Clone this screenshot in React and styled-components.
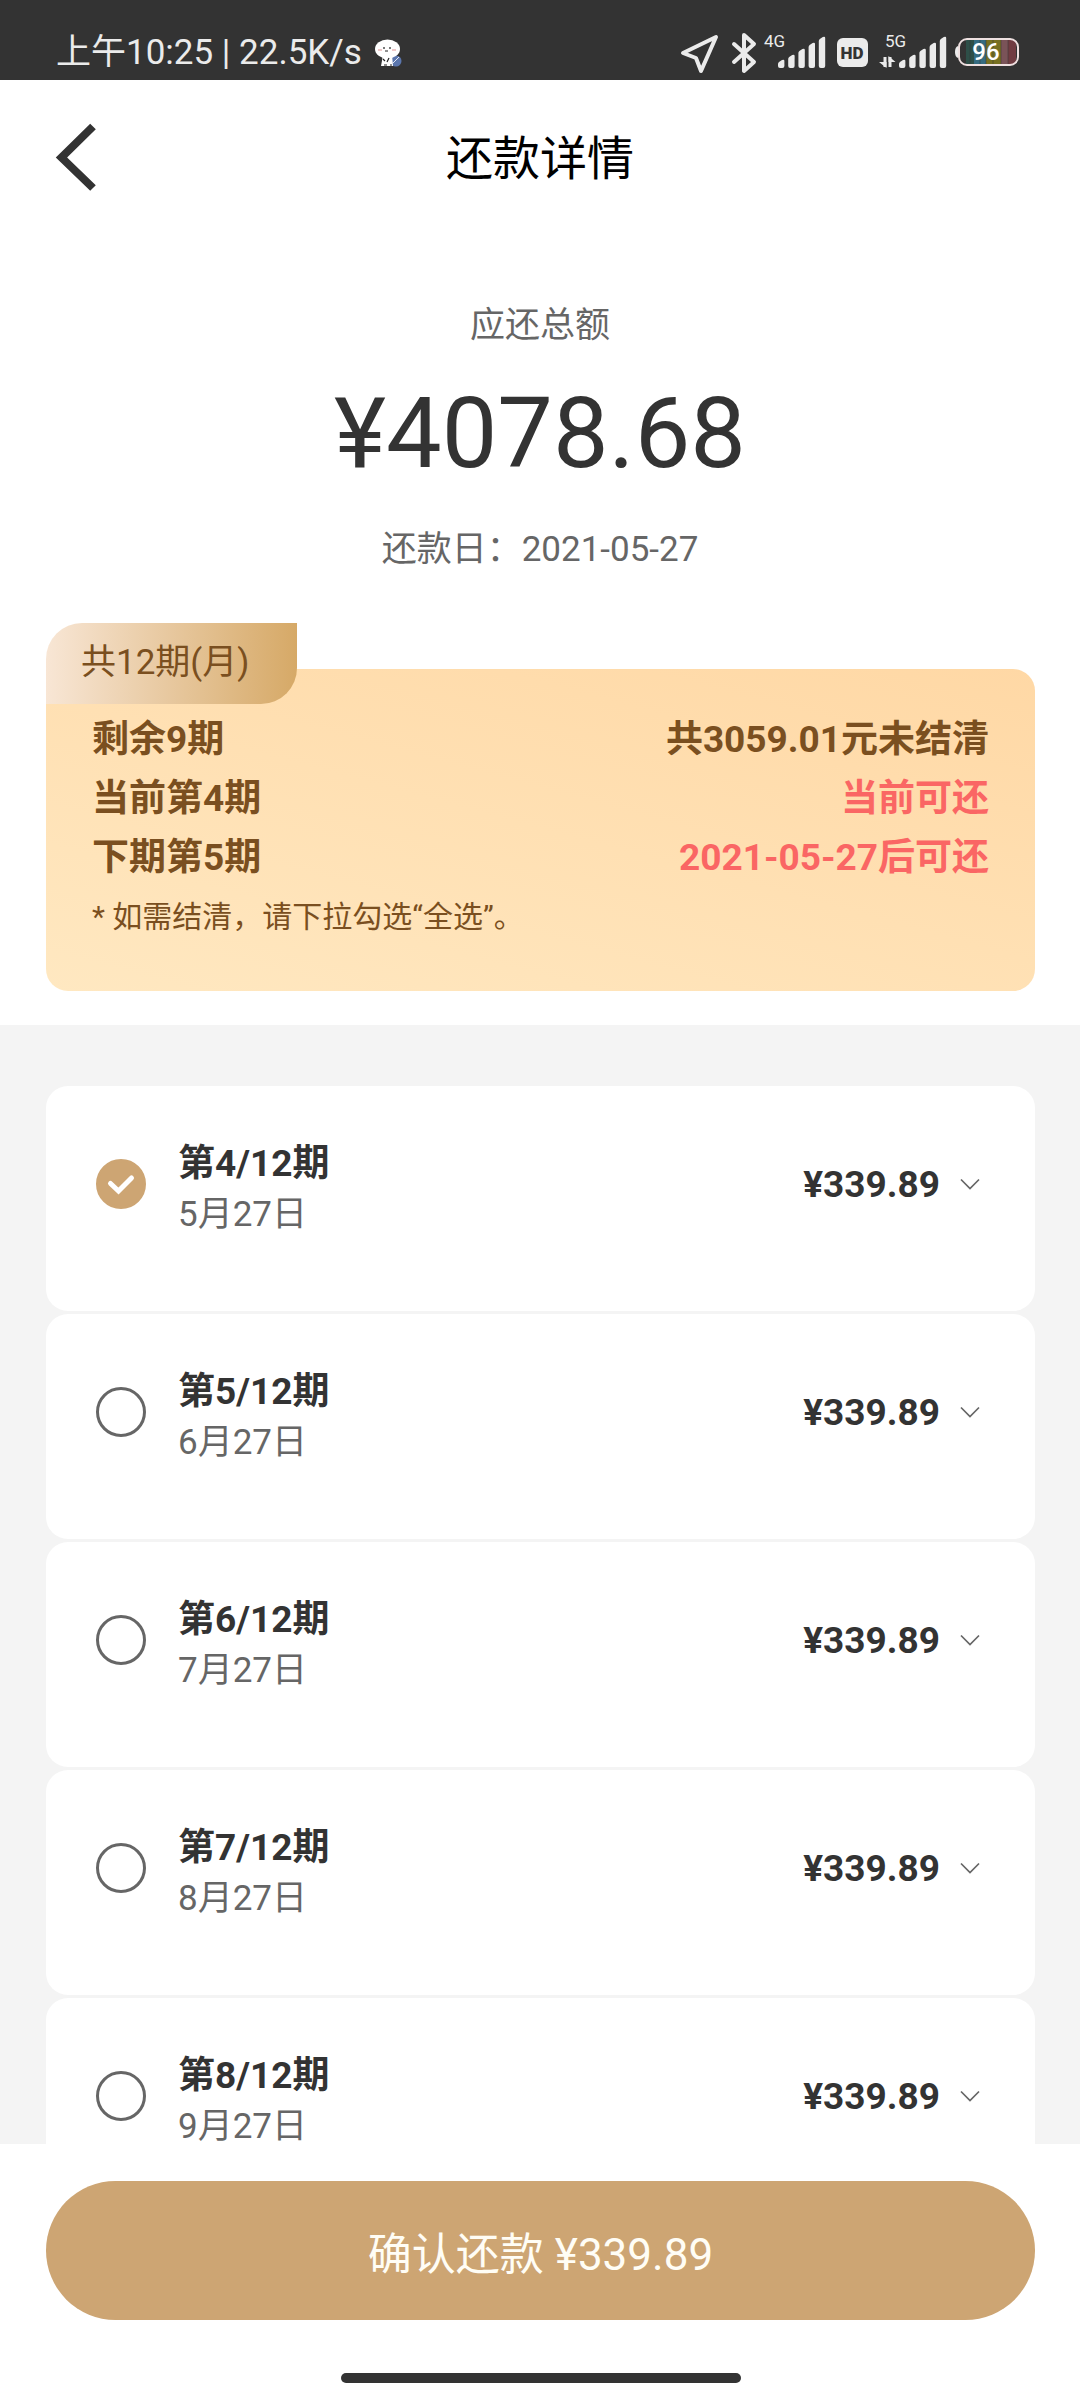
import React, { useState } from "react";
import styled, { createGlobalStyle } from "styled-components";

const GlobalStyle = createGlobalStyle`
  * { box-sizing: border-box; }
  body {
    margin: 0;
    background: #fff;
    color: #333;
    font-family: Roboto, "Noto Sans CJK SC", sans-serif;
  }
  button { font-family: inherit; border: 0; padding: 0; background: none; color: inherit; }
`;

const Page = styled.div`
  height: 100vh;
  display: flex;
  flex-direction: column;
`;

const StatusBar = styled.header`
  display: flex;
  align-items: center;
  justify-content: space-between;
  height: 80px;
  padding: 26px 61px 0 56px;
  background: #333;
  color: #ebebeb;
`;

const StatusGroup = styled.div`
  display: flex;
  align-items: center;
  gap: 12px;
`;

const Clock = styled.span`
  font-size: 35px;
  line-height: 48px;
`;

const Sticker = styled.svg`
  width: 28px;
  height: 28px;
`;

const StatusIcon = styled.svg`
  display: block;
  width: 339px;
  height: 44px;
`;

const NavBar = styled.nav`
  display: grid;
  grid-template-columns: 1fr auto 1fr;
  align-items: center;
  height: 156px;
  padding: 0 46px;
`;

const BackButton = styled.button`
  justify-self: start;
  width: 60px;
  height: 80px;
  svg { display: block; }
`;

const Title = styled.h1`
  margin: 0;
  padding-top: 2px;
  font-size: 47px;
  line-height: 60px;
  font-weight: 400;
  color: #000;
`;

const Summary = styled.section`
  display: flex;
  flex-direction: column;
  align-items: center;
  padding: 66px 46px 49px;
`;

const SummaryText = styled.p`
  margin: 0;
  font-size: 35px;
  line-height: 48px;
  color: #666;
`;

const Total = styled.p`
  margin: 25px 0 35px;
  font-size: 99px;
  line-height: 116px;
`;

const Plan = styled.section`
  display: flex;
  flex-direction: column;
  align-items: stretch;
  padding: 0 45px 34px 46px;
  color: #7a4f20;
`;

const PlanChip = styled.div`
  align-self: flex-start;
  z-index: 1;
  height: 81px;
  margin-bottom: -35px;
  padding: 0 47px 0 35px;
  border-radius: 36px 0 36px 0;
  background: linear-gradient(90deg, #f8e6d5, #d6a967);
  font-size: 35px;
  line-height: 80px;
`;

const PlanCard = styled.div`
  padding: 41px 46px 44px;
  border-radius: 22px;
  background: linear-gradient(195deg, #ffd8a5, #ffe8c1);
`;

const PlanRow = styled.div`
  display: flex;
  justify-content: space-between;
  font-size: 37px;
  line-height: 59px;
  font-weight: 700;
`;

const PlanValue = styled.span`
  color: ${(p) => (p.$alert ? "#fa6664" : "inherit")};
`;

const PlanNote = styled.p`
  margin: 0;
  font-size: 30px;
  line-height: 60px;
`;

const List = styled.ul`
  flex: 1;
  min-height: 0;
  margin: 0;
  padding: 61px 45px 0 46px;
  list-style: none;
  overflow-y: auto;
  scrollbar-width: none;
  background: #f4f4f4;
`;

const Item = styled.li`
  display: flex;
  align-items: center;
  margin-bottom: 3px;
  padding: 42px 55px 71px 50px;
  border-radius: 22px;
  background: #fff;
`;

const ItemLabel = styled.label`
  display: flex;
  flex: 1;
  align-items: center;
  gap: 32px;
`;

const Tick = styled.span`
  display: grid;
  width: 50px;
  height: 50px;
  & > * { grid-area: 1 / 1; }
`;

const TickInput = styled.input`
  appearance: none;
  width: 50px;
  height: 50px;
  margin: 0;
  border: 3px solid #666;
  border-radius: 50%;
  &:checked { border-color: #cda573; background: #cda573; }
`;

const TickMark = styled.svg`
  width: 50px;
  height: 50px;
  pointer-events: none;
`;

const ItemText = styled.span`
  display: flex;
  flex-direction: column;
  gap: 8px;
  padding: 10px 0 8px;
`;

const Period = styled.strong`
  font-size: 37px;
  line-height: 51px;
  font-weight: 700;
`;

const DueDate = styled.span`
  font-size: 35px;
  line-height: 35px;
  color: #666;
`;

const Amount = styled.span`
  font-size: 37px;
  line-height: 51px;
  font-weight: 700;
`;

const ExpandButton = styled.button`
  display: flex;
  margin-left: 20px;
`;

const Footer = styled.footer`
  display: flex;
  flex-direction: column;
  align-items: center;
  padding: 37px 45px 17px 46px;
  background: #fff;
`;

const ConfirmButton = styled.button`
  align-self: stretch;
  height: 139px;
  padding-top: 8px;
  border-radius: 70px;
  background: #cda573;
  color: #fffdf5;
  font-size: 44px;
  line-height: 60px;
`;

const HomeBar = styled.div`
  width: 400px;
  height: 10px;
  margin-top: 53px;
  border-radius: 5px;
  background: #333;
`;

const items = [
  { n: 4, date: "5月27日" },
  { n: 5, date: "6月27日" },
  { n: 6, date: "7月27日" },
  { n: 7, date: "8月27日" },
  { n: 8, date: "9月27日" },
];

const planRows = [
  { label: "剩余9期", value: "共3059.01元未结清" },
  { label: "当前第4期", value: "当前可还", alert: true },
  { label: "下期第5期", value: "2021-05-27后可还", alert: true },
];

function Bars({ x }) {
  const tops = [30, 25, 19, 13, 7];
  return tops.map((t, i) => {
    const l = x + i * 10.2;
    return (
      <path
        key={t}
        fill="#ebebeb"
        d={`M${l} ${t + 4}q0-1 1-2l3-2q2.400-1 2.400 1V36q0 2-2 2h-2.400q-2 0-2-2z`}
      />
    );
  });
}

function StatusIcons() {
  return (
    <StatusIcon viewBox="0 1 339 44" aria-hidden="true">
      <path d="M3 23 36 7 21 41 16 28z" fill="none" stroke="#ebebeb" strokeWidth="4" strokeLinejoin="round" />
      <path d="M54 14 74 32 64 41V5L74 14 54 32" fill="none" stroke="#ebebeb" strokeWidth="4" strokeLinecap="round" strokeLinejoin="round" />
      <text x="84" y="17" fontSize="17" fill="#ebebeb">4G</text>
      <Bars x={98} />
      <rect x="157" y="8" width="31" height="29" rx="6" fill="#ebebeb" />
      <text x="172" y="29" fontSize="17" fontWeight="900" textAnchor="middle" fill="#333">HD</text>
      <text x="205" y="17" fontSize="17" fill="#ebebeb">5G</text>
      <path d="M205 27v10M210 37V27" stroke="#ebebeb" strokeWidth="3" />
      <path d="M199 32h7.500v6zM208.500 26v6h7z" fill="#ebebeb" />
      <Bars x={219} />
      <path d="M278 16v12q-3-1-3-6t3-6z" fill="#ebebeb" />
      <rect x="286" y="10" width="8" height="24" fill="#2e4f48" />
      <rect x="294" y="10" width="12" height="24" fill="#356b80" />
      <rect x="306" y="10" width="15" height="24" fill="#777021" />
      <rect x="321" y="10" width="7" height="24" fill="#7a5358" />
      <rect x="328" y="10" width="8" height="24" fill="#713c42" />
      <path d="M290 10v24M300 10v24M306 10v24M313 10v24M321 10v24M328 10v24" stroke="#333" strokeOpacity=".5" />
      <rect x="279" y="9" width="59" height="26" rx="8" fill="none" stroke="#eee0e0" strokeWidth="2" />
      <text x="306" y="30" fontSize="24" fontWeight="500" textAnchor="middle" fill="#fff">96</text>
    </StatusIcon>
  );
}

export default function App() {
  const [selected, setSelected] = useState([4]);
  const toggle = (n) =>
    setSelected((s) => (s.includes(n) ? s.filter((v) => v !== n) : [...s, n]));

  return (
    <Page>
      <GlobalStyle />
      <StatusBar>
        <StatusGroup>
          <Clock>上午10:25 | 22.5K/s</Clock>
          <Sticker viewBox="0 0 28 28" aria-hidden="true">
            <circle cx="22" cy="22" r="5.500" fill="#5b76ad" />
            <path d="M9 16h9l1 11H7z" fill="#fff" />
            <ellipse cx="13.500" cy="10" rx="12.500" ry="9.500" fill="#fff" />
            <path d="M10 8v2M16 8v2M11 12h3M9 20l2 2M15 19l-2 4M10 26h3M16 26h2" stroke="#222" strokeWidth="1.200" />
            <path d="M4 11h4M18 11h4" stroke="#eab6b6" strokeWidth="1.500" />
            <path d="m19 24 6-6" stroke="#e4eaf5" strokeWidth="1" />
          </Sticker>
        </StatusGroup>
        <StatusIcons />
      </StatusBar>

      <NavBar>
        <BackButton aria-label="返回">
          <svg width="60" height="80" viewBox="0 0 60 80">
            <path d="M47 8.500 15.500 39.500 47 70" fill="none" stroke="#333" strokeWidth="8" />
          </svg>
        </BackButton>
        <Title>还款详情</Title>
      </NavBar>

      <Summary>
        <SummaryText>应还总额</SummaryText>
        <Total>¥4078.68</Total>
        <SummaryText>还款日：2021-05-27</SummaryText>
      </Summary>

      <Plan>
        <PlanChip>共12期(月)</PlanChip>
        <PlanCard>
          {planRows.map((r) => (
            <PlanRow key={r.label}>
              <span>{r.label}</span>
              <PlanValue $alert={r.alert}>{r.value}</PlanValue>
            </PlanRow>
          ))}
          <PlanNote>* 如需结清，请下拉勾选“全选”。</PlanNote>
        </PlanCard>
      </Plan>

      <List>
        {items.map(({ n, date }) => (
          <Item key={n}>
            <ItemLabel htmlFor={`period-${n}`}>
              <Tick>
                <TickInput
                  id={`period-${n}`}
                  type="checkbox"
                  checked={selected.includes(n)}
                  onChange={() => toggle(n)}
                />
                {selected.includes(n) && (
                  <TickMark viewBox="0 0 50 50" aria-hidden="true">
                    <path d="M14.500 24.500 22.500 32 35.500 19" fill="none" stroke="#fff" strokeWidth="5" strokeLinecap="round" />
                  </TickMark>
                )}
              </Tick>
              <ItemText>
                <Period>第{n}/12期</Period>
                <DueDate>{date}</DueDate>
              </ItemText>
            </ItemLabel>
            <Amount>¥339.89</Amount>
            <ExpandButton aria-label="展开">
              <svg width="20" height="20" viewBox="0 0 20 20">
                <path d="M1 5.500 10 14.500 19 5.500" fill="none" stroke="#666" strokeWidth="1.700" />
              </svg>
            </ExpandButton>
          </Item>
        ))}
      </List>

      <Footer>
        <ConfirmButton>确认还款 ¥339.89</ConfirmButton>
        <HomeBar />
      </Footer>
    </Page>
  );
}
